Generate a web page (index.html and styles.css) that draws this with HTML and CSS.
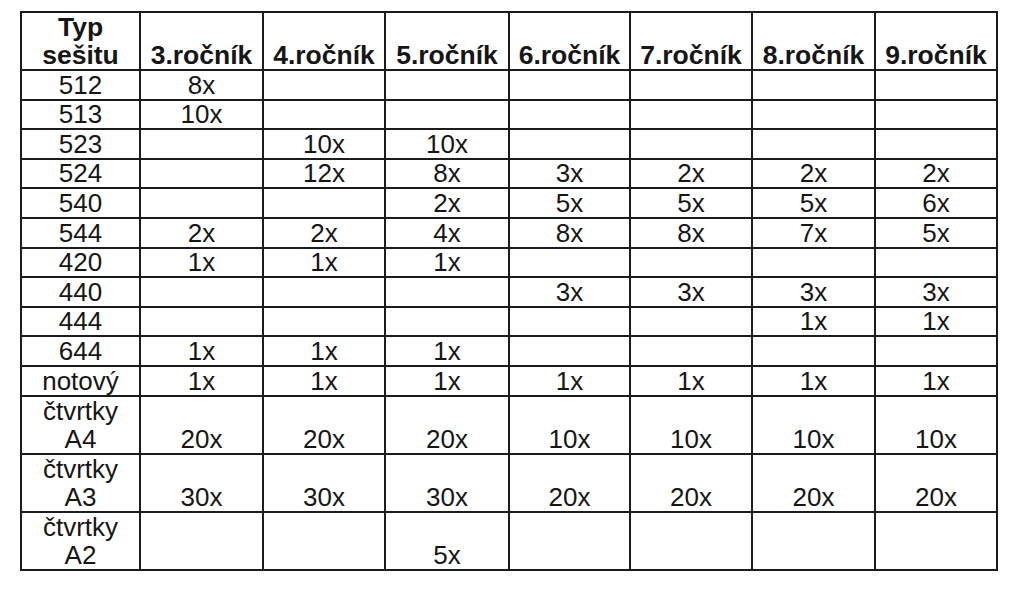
FILE: index.html
```html
<!DOCTYPE html>
<html lang="cs">
<head>
<meta charset="utf-8">
<title>Typ sešitu</title>
<link rel="stylesheet" href="styles.css">
</head>
<body>
<div class="page">
<table class="grid">
  <colgroup>
    <col class="c0"><col class="c1"><col class="c2"><col class="c3"><col class="c4"><col class="c5"><col class="c6"><col class="c7">
  </colgroup>
  <thead>
    <tr class="head">
      <th>Typ<br>sešitu</th><th>3.ročník</th><th>4.ročník</th><th>5.ročník</th><th>6.ročník</th><th>7.ročník</th><th>8.ročník</th><th>9.ročník</th>
    </tr>
  </thead>
  <tbody>
    <tr class="one"><td>512</td><td>8x</td><td></td><td></td><td></td><td></td><td></td><td></td></tr>
    <tr class="one"><td>513</td><td>10x</td><td></td><td></td><td></td><td></td><td></td><td></td></tr>
    <tr class="one"><td>523</td><td></td><td>10x</td><td>10x</td><td></td><td></td><td></td><td></td></tr>
    <tr class="one"><td>524</td><td></td><td>12x</td><td>8x</td><td>3x</td><td>2x</td><td>2x</td><td>2x</td></tr>
    <tr class="one"><td>540</td><td></td><td></td><td>2x</td><td>5x</td><td>5x</td><td>5x</td><td>6x</td></tr>
    <tr class="one"><td>544</td><td>2x</td><td>2x</td><td>4x</td><td>8x</td><td>8x</td><td>7x</td><td>5x</td></tr>
    <tr class="one"><td>420</td><td>1x</td><td>1x</td><td>1x</td><td></td><td></td><td></td><td></td></tr>
    <tr class="one"><td>440</td><td></td><td></td><td></td><td>3x</td><td>3x</td><td>3x</td><td>3x</td></tr>
    <tr class="one"><td>444</td><td></td><td></td><td></td><td></td><td></td><td>1x</td><td>1x</td></tr>
    <tr class="one"><td>644</td><td>1x</td><td>1x</td><td>1x</td><td></td><td></td><td></td><td></td></tr>
    <tr class="one"><td>notový</td><td>1x</td><td>1x</td><td>1x</td><td>1x</td><td>1x</td><td>1x</td><td>1x</td></tr>
    <tr class="two"><td>čtvrtky<br>A4</td><td>20x</td><td>20x</td><td>20x</td><td>10x</td><td>10x</td><td>10x</td><td>10x</td></tr>
    <tr class="two"><td>čtvrtky<br>A3</td><td>30x</td><td>30x</td><td>30x</td><td>20x</td><td>20x</td><td>20x</td><td>20x</td></tr>
    <tr class="two"><td>čtvrtky<br>A2</td><td></td><td></td><td>5x</td><td></td><td></td><td></td><td></td></tr>
  </tbody>
</table>
</div>
</body>
</html>
```

FILE: styles.css
```css
html, body {
  margin: 0;
  padding: 0;
  background: #ffffff;
}

.page {
  padding: 11px 0 0 20px;
}

.grid {
  border-collapse: collapse;
  table-layout: fixed;
  width: 978px;
  font-family: "Liberation Sans", Arial, sans-serif;
  color: #161616;
}

.c0 { width: 119px; }
.c1 { width: 123px; }
.c2 { width: 122px; }
.c3 { width: 124px; }
.c4 { width: 121px; }
.c5 { width: 122px; }
.c6 { width: 123px; }
.c7 { width: 122px; }

.grid th,
.grid td {
  border: 2px solid #1c1c1c;
  padding: 0;
  text-align: center;
  vertical-align: bottom;
  white-space: nowrap;
  overflow: hidden;
}

.grid th {
  font-weight: bold;
  font-size: 26.5px;
  line-height: 28px;
}

.grid td {
  font-weight: normal;
  font-size: 26px;
  line-height: 27px;
}

.grid .two td {
  line-height: 28px;
}

.head { height: 58px; }
.one { height: 29.6px; }
.two { height: 58.3px; }
```
